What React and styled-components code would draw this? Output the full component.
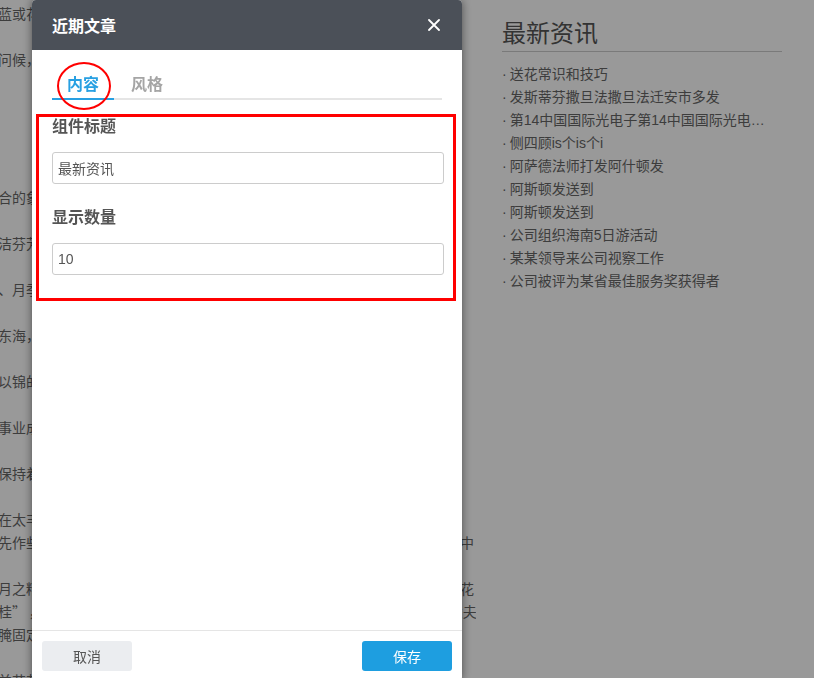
import React from "react"
import styled, { createGlobalStyle } from "styled-components"

const GlobalStyle = createGlobalStyle`
  html, body {
    margin: 0;
    padding: 0;
    background: #fff;
    overflow: hidden;
  }
  * { box-sizing: border-box; }
`

// page behind the dialog
const articleParas = [
    ["蓝或花色的玫瑰寓意着浪漫与忠贞。"],
    ["问候，也可以表达感谢之情。"],
    [],
    [],
    ["合的象征，寓意百年好合。"],
    ["洁芬芳的花朵寓意着纯真友谊。"],
    ["、月季象征着热情与美好。"],
    ["东海，寿比南山。"],
    ["以锦的寓意为前程似锦。"],
    ["事业成功，蒸蒸日上。"],
    ["保持着新鲜的花朵。"],
    ["在太丰富的色彩中挑选。", "先作些修剪处理，斜剪花茎后立即插入清水，放置于阴凉通风的室内环境之中"],
    [
        "月之精华的桂花，自古以来就被视为吉祥之物，象征着高洁、美好与荣誉的花",
        "桂”\u2009，古时有蟾宫折桂之说，用来比喻科举高中，也常常送给读书人或士大夫",
        "腌固定的方式保存。",
    ],
    ["并花艺装饰。"],
]

const news = [
    "送花常识和技巧",
    "发斯蒂芬撒旦法撒旦法迁安市多发",
    "第14中国国际光电子第14中国国际光电子博览会",
    "侧四顾is个is个i",
    "阿萨德法师打发阿什顿发",
    "阿斯顿发送到",
    "阿斯顿发送到",
    "公司组织海南5日游活动",
    "某某领导来公司视察工作",
    "公司被评为某省最佳服务奖获得者",
]

const CloseIcon = () => (
    <svg width="12" height="12" viewBox="0 0 12 12">
        <path d="M1 1 L11 11 M11 1 L1 11" stroke="#fff" strokeWidth="1.8" strokeLinecap="round" />
    </svg>
)

export default function App() {
    return (
        <>
            <GlobalStyle />
            <Page>
                <Article>
                    {articleParas.map((lines, i) => (
                        <Para key={i}>
                            {lines.length === 0 ? <Line>&nbsp;</Line> : lines.map((l, j) => <Line key={j}>{l}</Line>)}
                        </Para>
                    ))}
                </Article>
                <Sidebar>
                    <SideTitle>最新资讯</SideTitle>
                    <NewsList>
                        {news.map((n, i) => (
                            <NewsItem key={i}>{n}</NewsItem>
                        ))}
                    </NewsList>
                </Sidebar>
            </Page>
            <Overlay />
            <Dialog>
                <Header>
                    <Title>近期文章</Title>
                    <CloseBtn><CloseIcon /></CloseBtn>
                </Header>
                <Body>
                    <TabBar>
                        <Tab active>内容</Tab>
                        <Tab>风格</Tab>
                    </TabBar>
                    <Form>
                        <Field>
                            <Label>组件标题</Label>
                            <Input defaultValue="最新资讯" />
                        </Field>
                        <Field>
                            <Label>显示数量</Label>
                            <Input defaultValue="10" />
                        </Field>
                    </Form>
                </Body>
                <Footer>
                    <Button>取消</Button>
                    <Button primary>保存</Button>
                </Footer>
                <MarkCircle />
                <MarkBox />
            </Dialog>
        </>
    )
}

// CSS Components

const Page = styled.div`
display: flex;
height: 100vh;
overflow: hidden;
font-family: "Noto Sans CJK SC", sans-serif;
`

const Article = styled.div`
flex-shrink: 0;
width: 478px;
margin-left: -2px;
padding-top: 2px;
overflow: hidden;
font-size: 14px;
line-height: 23px;
color: #666;
`

const Para = styled.div`
margin-bottom: 23px;
`

const Line = styled.div`
white-space: nowrap;
`

const Sidebar = styled.div`
flex-shrink: 0;
width: 280px;
margin-left: 26px;
`

const SideTitle = styled.h2`
margin: 0;
padding-top: 15px;
padding-bottom: 2px;
font-size: 24px;
line-height: 34px;
font-weight: normal;
color: #555;
border-bottom: 1px solid #ccc;
`

const NewsList = styled.ul`
list-style: none;
margin: 11px 0 0;
padding: 0;
`

const NewsItem = styled.li`
max-width: 270px;
font-family: "Liberation Sans", "Noto Sans CJK SC", sans-serif;
font-size: 14px;
line-height: 23px;
color: #666;
white-space: nowrap;
overflow: hidden;
text-overflow: ellipsis;
&::before {
    content: "·";
    margin-right: 3px;
}
`

const Overlay = styled.div`
position: fixed;
inset: 0;
background: rgba(0, 0, 0, 0.4);
`

const Dialog = styled.div`
position: fixed;
left: 32px;
top: 0;
width: 430px;
height: 681px;
display: flex;
flex-direction: column;
background: #fff;
border-radius: 4px;
box-shadow: 0 0 10px rgba(0, 0, 0, 0.5);
font-family: "Liberation Sans", "Noto Sans CJK SC", sans-serif;
`

const Header = styled.div`
height: 50px;
flex-shrink: 0;
display: flex;
align-items: center;
justify-content: space-between;
padding: 0 22px 0 20px;
background: #4b5058;
border-radius: 4px 4px 0 0;
`

const Title = styled.div`
font-size: 16px;
font-weight: bold;
color: #fff;
`

const CloseBtn = styled.span`
display: flex;
cursor: pointer;
`

const Body = styled.div`
flex: 1;
padding: 0 18px 0 20px;
`

const TabBar = styled.div`
display: flex;
gap: 2px;
margin-top: 16px;
margin-right: 2px;
border-bottom: 2px solid #e5e5e5;
`

const Tab = styled.div`
padding: 7px 15px 1px;
margin-bottom: -2px;
font-size: 16px;
line-height: 24px;
font-weight: bold;
color: ${(props) => props.active ? "#28a0e2" : "#a5a5a5"};
border-bottom: 2px solid ${(props) => props.active ? "#28a0e2" : "transparent"};
`

const Form = styled.div`
padding-top: 16px;
`

const Field = styled.div`
& + & {
    margin-top: 23px;
}
`

const Label = styled.div`
font-size: 16px;
line-height: 22px;
font-weight: bold;
color: #555;
margin-bottom: 14px;
`

const Input = styled.input`
display: block;
width: 100%;
height: 32px;
padding: 0 5px;
border: 1px solid #ccc;
border-radius: 3px;
font-family: "Liberation Sans", "Noto Sans CJK SC", sans-serif;
font-size: 14px;
color: #555;
outline: none;
`

const Footer = styled.div`
flex-shrink: 0;
display: flex;
justify-content: space-between;
padding: 10px;
border-top: 1px solid #e5e5e5;
`

const Button = styled.button`
width: 90px;
height: 30px;
border: none;
border-radius: 3px;
font-family: "Liberation Sans", "Noto Sans CJK SC", sans-serif;
font-size: 14px;
background: ${(props) => props.primary ? "#1e9ee0" : "#ebedf0"};
color: ${(props) => props.primary ? "#fff" : "#555"};
cursor: pointer;
`

// red annotation marks drawn over the dialog
const MarkCircle = styled.div`
position: absolute;
left: 25px;
top: 62px;
width: 54px;
height: 48px;
border: 2px solid #f00;
border-radius: 50%;
pointer-events: none;
`

const MarkBox = styled.div`
position: absolute;
left: 4px;
top: 114px;
width: 420px;
height: 187px;
border: 3px solid #f00;
pointer-events: none;
`
